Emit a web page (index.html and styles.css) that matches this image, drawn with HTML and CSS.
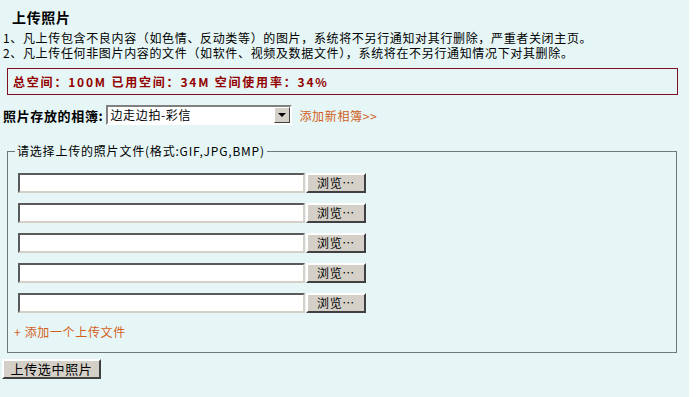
FILE: index.html
```html
<!DOCTYPE html>
<html lang="zh-CN">
<head>
    <meta charset="UTF-8">
    <title>上传照片</title>
    <link rel="stylesheet" href="styles.css">
</head>
<body>
    <div class="page">
        <h2 class="title">上传照片</h2>
        <div class="notice">
            <p>1、凡上传包含不良内容（如色情、反动类等）的图片，系统将不另行通知对其行删除，严重者关闭主页。</p>
            <p>2、凡上传任何非图片内容的文件（如软件、视频及数据文件），系统将在不另行通知情况下对其删除。</p>
        </div>
        <div class="quota">总空间：100M 已用空间：34M 空间使用率：34%</div>
        <div class="album-row">
            <label class="album-label">照片存放的相簿:</label>
            <div class="select">
                <span class="select-text">边走边拍-彩信</span>
                <span class="select-arrow"><span class="tri"></span></span>
            </div>
            <a class="link" href="#">添加新相簿&gt;&gt;</a>
        </div>
        <fieldset class="upload">
            <legend>请选择上传的照片文件(格式:GIF,JPG,BMP)</legend>
            <div class="file-row"><input class="file-text" type="text"><button class="browse">浏览…</button></div>
            <div class="file-row"><input class="file-text" type="text"><button class="browse">浏览…</button></div>
            <div class="file-row"><input class="file-text" type="text"><button class="browse">浏览…</button></div>
            <div class="file-row"><input class="file-text" type="text"><button class="browse">浏览…</button></div>
            <div class="file-row"><input class="file-text" type="text"><button class="browse">浏览…</button></div>
            <a class="add-file" href="#">+ 添加一个上传文件</a>
        </fieldset>
        <button class="submit">上传选中照片</button>
    </div>
</body>
</html>
```
FILE: styles.css
```css
body {
    margin: 0;
    background-color: #fff;
    font-family: "Noto Sans CJK SC", "DejaVu Sans", sans-serif;
    font-size: 12px;
    letter-spacing: 0.65px;
    color: #000;
}
.page {
    width: 689px;
    height: 397px;
    background-color: #e6f6f6;
    overflow: hidden;
}
.title {
    margin: 0;
    padding: 9px 0 0 12px;
    font-size: 14px;
    line-height: 16px;
    font-weight: bold;
}
.notice {
    margin-top: 6px;
    padding-left: 3px;
}
.notice p {
    margin: 0;
    height: 15px;
    line-height: 14px;
}
.quota {
    margin: 7px 0 0 7px;
    width: 671px;
    height: 27px;
    box-sizing: border-box;
    border: 1px solid #7d1022;
    color: #920000;
    font-weight: bold;
    letter-spacing: 1.8px;
    padding-left: 5px;
    line-height: 25px;
}
.album-row {
    display: flex;
    align-items: center;
    margin-top: 10px;
    padding-left: 3px;
    height: 20px;
}
.album-label {
    font-weight: bold;
    font-size: 13px;
    margin-right: 3px;
}
.select {
    display: flex;
    width: 186px;
    height: 20px;
    box-sizing: border-box;
    border: 2px solid;
    border-color: #808080 #fff #fff #808080;
    background-color: #fff;
}
.select-text {
    flex: 1;
    line-height: 16px;
    padding-left: 2px;
}
.select-arrow {
    width: 16px;
    display: flex;
    align-items: center;
    justify-content: center;
    background-color: #d4d0c8;
    border: 1px solid;
    border-color: #fff #404040 #404040 #fff;
    box-sizing: border-box;
}
.tri {
    width: 0;
    height: 0;
    border-left: 4px solid transparent;
    border-right: 4px solid transparent;
    border-top: 4px solid #000;
}
.link {
    margin-left: 7px;
    color: #d2601a;
    text-decoration: none;
}
.upload {
    margin: 19px 0 0 7px;
    width: 670px;
    box-sizing: border-box;
    border: 1px solid #6e7876;
    padding: 15px 10px 13px;
}
.upload legend {
    padding: 0 2px;
    margin-left: -3px;
    line-height: 14px;
    letter-spacing: 0.8px;
}
.file-row {
    display: flex;
    align-items: center;
    height: 20px;
    margin-bottom: 10px;
}
.file-text {
    width: 287px;
    height: 20px;
    margin: 0;
    box-sizing: border-box;
    border: 2px solid;
    border-color: #5a5a5a #d4d0c8 #d4d0c8 #5a5a5a;
    background-color: #fff;
    padding: 0;
}
.browse,
.submit {
    font-family: inherit;
    font-size: 12px;
    letter-spacing: 0.65px;
    background-color: #d4d0c8;
    border: 2px solid;
    border-color: #fff #404040 #404040 #fff;
    padding: 0;
    margin: 0;
    color: #000;
}
.browse {
    width: 60px;
    height: 20px;
    margin-left: 1px;
    line-height: 16px;
}
.add-file {
    display: block;
    margin-top: 12px;
    margin-left: -4px;
    line-height: 14px;
    color: #d2601a;
    text-decoration: none;
}
.submit {
    display: block;
    width: 99px;
    height: 20px;
    margin: 6px 0 0 2px;
    font-size: 13px;
    line-height: 16px;
}
```
